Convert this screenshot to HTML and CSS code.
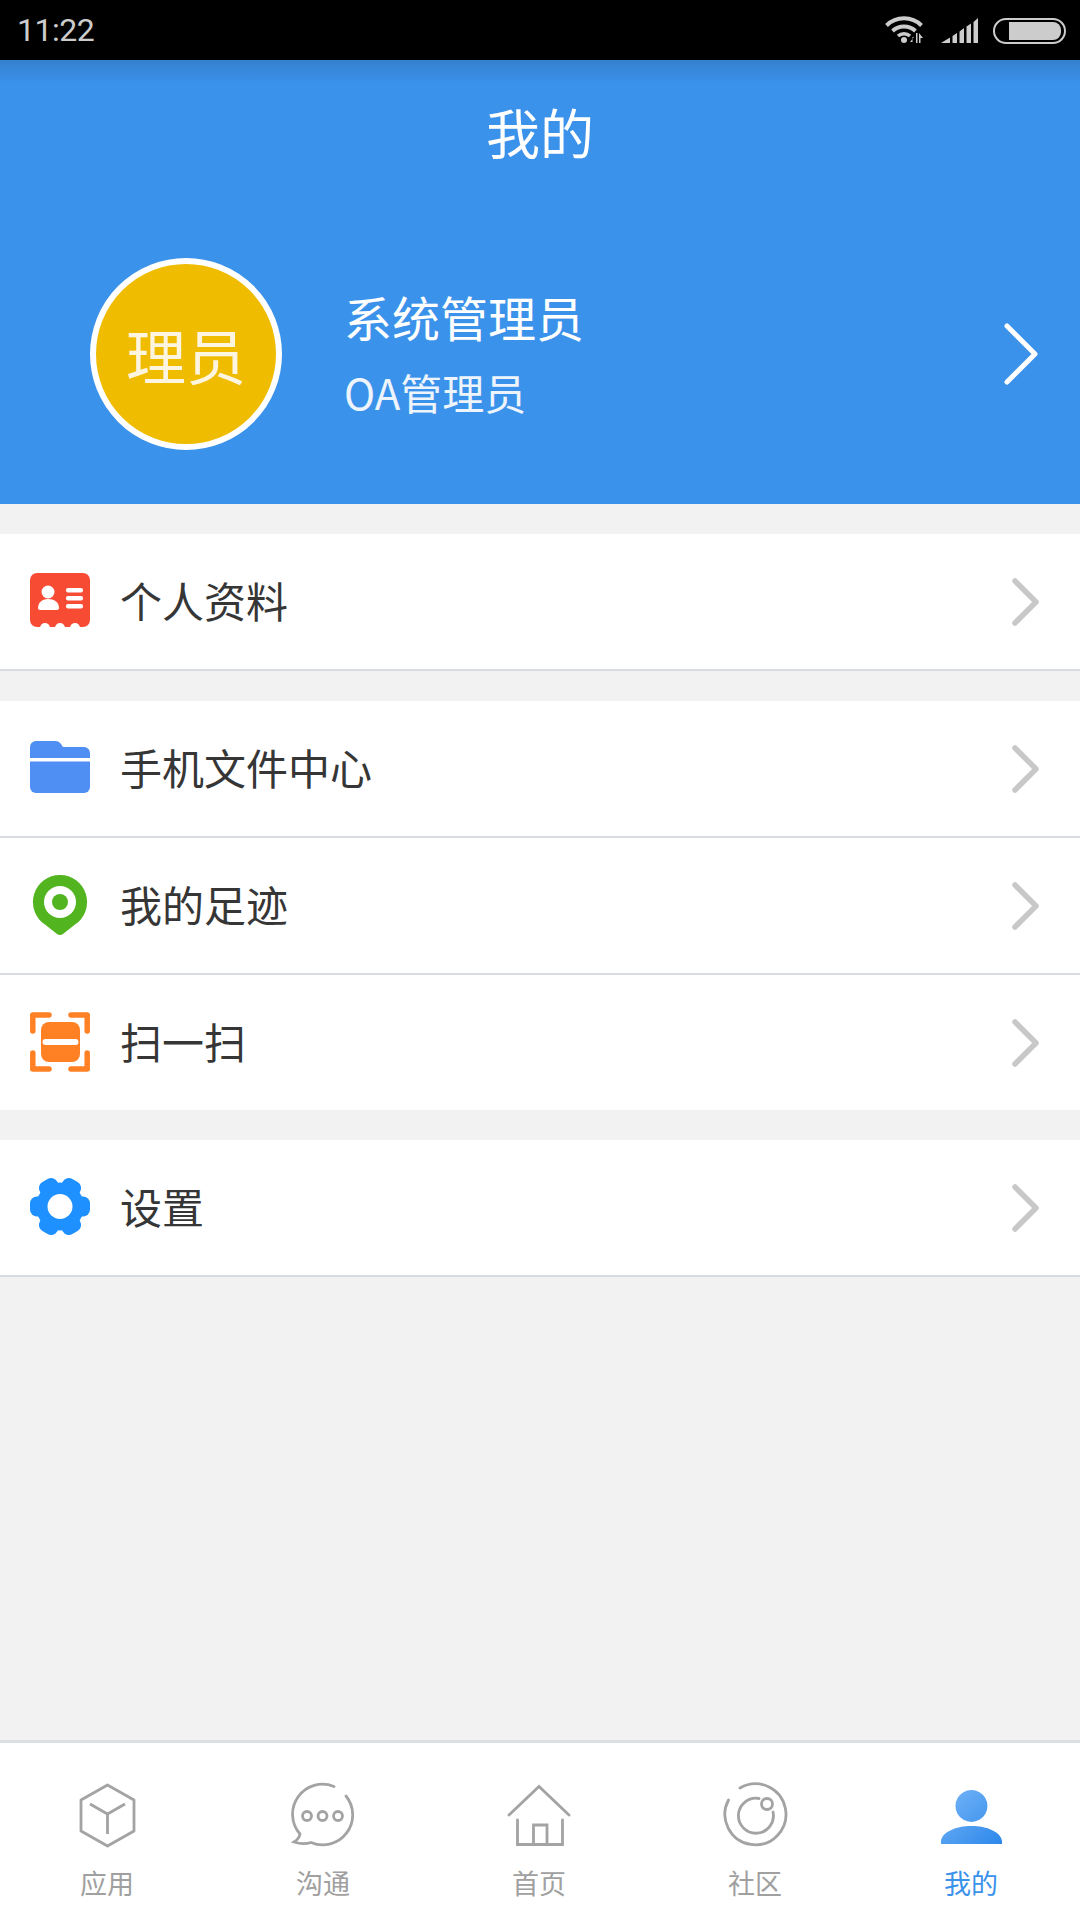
FILE: index.html
```html
<!DOCTYPE html>
<html lang="zh-CN">
<head>
    <meta charset="UTF-8">
    <meta name="viewport" content="width=device-width, initial-scale=1.0">
    <title>我的</title>
    <link rel="stylesheet" href="styles.css">
</head>
<body>
<div class="page">
    <!-- Status bar -->
    <div class="status-bar">
        <span class="time">11:22</span>
        <div class="status-icons">
            <svg class="wifi" width="38" height="27" viewBox="0 0 38 27">
                <g fill="none" stroke="#ccc" stroke-width="4">
                    <path d="M1.5 9.5 A25 25 0 0 1 36.5 9.5"/>
                    <path d="M7.5 15 A17 17 0 0 1 30.5 15"/>
                    <path d="M13 20 A9 9 0 0 1 25 20" stroke-width="3.5"/>
                </g>
                <circle cx="19" cy="24" r="3" fill="#ccc"/>
                <path d="M29 21 H27.5 V26 H25 L29 21Z M31 27 V17 H32.5 V27Z M34 27 V17 L38 22 H35.5 V27Z" fill="#ccc"/>
            </svg>
            <svg class="signal" width="37" height="25" viewBox="0 0 37 25">
                <path d="M0 25 L9 19.5 V25Z M11.5 18 L16 15 V25 H11.5Z M18.5 13.5 L23 10 V25 H18.5Z M25.5 8.500 L30 5.500 V25 H25.500Z M32.500 4 L37 0 V25 H32.500Z" fill="#ccc"/>
            </svg>
            <div class="battery"><div class="battery-fill"></div></div>
        </div>
    </div>

    <!-- Header -->
    <div class="header">
        <div class="title">我的</div>
        <div class="profile">
            <div class="avatar">理员</div>
            <div class="profile-text">
                <div class="name">系统管理员</div>
                <div class="role">OA管理员</div>
            </div>
            <svg class="profile-arrow" width="34" height="62" viewBox="0 0 34 62">
                <path d="M3 3 L31 31 L3 59" fill="none" stroke="#fff" stroke-width="5" stroke-linecap="round" stroke-linejoin="round"/>
            </svg>
        </div>
    </div>

    <!-- Menu -->
    <div class="content">
        <div class="group">
            <div class="row">
                <svg class="row-icon" width="60" height="65" viewBox="0 0 60 65">
                    <rect y="4" width="60" height="54" rx="7" fill="#f84b34"/>
                    <g fill="#fff">
                        <circle cx="15" cy="59" r="5"/>
                        <circle cx="30" cy="59" r="5"/>
                        <circle cx="45" cy="59" r="5"/>
                        <circle cx="18" cy="23" r="6.500"/>
                        <path d="M8 39 C8 33 13 30 18 30 C24 30 29 33 29 39 Q29 41 26 41 H11 Q8 41 8 39Z"/>
                        <rect x="36" y="19" width="17" height="4.500" rx="2"/>
                        <rect x="36" y="27" width="17" height="4.500" rx="2"/>
                        <rect x="36" y="35" width="17" height="4.500" rx="2"/>
                    </g>
                </svg>
                <span class="row-label">个人资料</span>
                <svg class="row-arrow" width="28" height="52" viewBox="0 0 28 52">
                    <path d="M4 5 L25 26 L4 47" fill="none" stroke="#c8c8c8" stroke-width="5.500" stroke-linecap="round" stroke-linejoin="round"/>
                </svg>
            </div>
        </div>

        <div class="group">
            <div class="row">
                <svg class="row-icon" width="60" height="65" viewBox="0 0 60 65">
                    <g fill="#4f8ef3">
                        <path d="M0 22 V11 A6 6 0 0 1 6 5 H25 A7 7 0 0 1 31 8 L33 11 H54 A6 6 0 0 1 60 17 V22Z"/>
                        <path d="M0 25.500 H60 V51 A6 6 0 0 1 54 57 H6 A6 6 0 0 1 0 51Z"/>
                    </g>
                </svg>
                <span class="row-label">手机文件中心</span>
                <svg class="row-arrow" width="28" height="52" viewBox="0 0 28 52">
                    <path d="M4 5 L25 26 L4 47" fill="none" stroke="#c8c8c8" stroke-width="5.500" stroke-linecap="round" stroke-linejoin="round"/>
                </svg>
            </div>
            <div class="row">
                <svg class="row-icon" width="60" height="65" viewBox="0 0 60 65">
                    <path d="M30 2 A27 27 0 0 1 45 51.500 L33 61 Q30 63 27 61 L15 51.500 A27 27 0 0 1 30 2Z" fill="#52b520"/>
                    <circle cx="30" cy="29" r="16" fill="#fff"/>
                    <circle cx="30" cy="29" r="8" fill="#52b520"/>
                </svg>
                <span class="row-label">我的足迹</span>
                <svg class="row-arrow" width="28" height="52" viewBox="0 0 28 52">
                    <path d="M4 5 L25 26 L4 47" fill="none" stroke="#c8c8c8" stroke-width="5.500" stroke-linecap="round" stroke-linejoin="round"/>
                </svg>
            </div>
            <div class="row row-last">
                <svg class="row-icon" width="60" height="65" viewBox="0 0 60 65">
                    <g fill="none" stroke="#ff8124" stroke-width="5.500" stroke-linecap="round" stroke-linejoin="round">
                        <path d="M2.800 21 V5 H19"/>
                        <path d="M41 5 H57.200 V21"/>
                        <path d="M2.800 43 V59 H19"/>
                        <path d="M41 59 H57.200 V43"/>
                    </g>
                    <rect x="11" y="12" width="39" height="40" rx="8" fill="#ff8124"/>
                    <rect x="12.500" y="29" width="36" height="6" rx="3" fill="#fff"/>
                </svg>
                <span class="row-label">扫一扫</span>
                <svg class="row-arrow" width="28" height="52" viewBox="0 0 28 52">
                    <path d="M4 5 L25 26 L4 47" fill="none" stroke="#c8c8c8" stroke-width="5.500" stroke-linecap="round" stroke-linejoin="round"/>
                </svg>
            </div>
        </div>

        <div class="group">
            <div class="row">
                <svg class="row-icon" width="60" height="65" viewBox="0 0 60 65">
                    <g fill="#1e90ff">
                        <circle cx="30" cy="31.500" r="24"/>
                        <rect x="0" y="21.500" width="60" height="20" rx="7"/>
                        <rect x="0" y="21.500" width="60" height="20" rx="7" transform="rotate(60 30 31.500)"/>
                        <rect x="0" y="21.500" width="60" height="20" rx="7" transform="rotate(120 30 31.500)"/>
                    </g>
                    <circle cx="30" cy="31.500" r="12.500" fill="#fff"/>
                </svg>
                <span class="row-label">设置</span>
                <svg class="row-arrow" width="28" height="52" viewBox="0 0 28 52">
                    <path d="M4 5 L25 26 L4 47" fill="none" stroke="#c8c8c8" stroke-width="5.500" stroke-linecap="round" stroke-linejoin="round"/>
                </svg>
            </div>
        </div>
    </div>

    <!-- Bottom tabs -->
    <div class="tabs">
        <div class="tab">
            <svg width="66" height="66" viewBox="0 0 66 66" fill="none" stroke="#a3a3a3" stroke-width="2.800" stroke-linejoin="round">
                <path d="M32.500 3 L59 18 V49 L32.500 64 L6 49 V18Z"/>
                <path d="M15 22 L32.500 32 L50 22 M32.500 32 V52"/>
            </svg>
            <span>应用</span>
        </div>
        <div class="tab">
            <svg width="66" height="66" viewBox="0 0 66 66" fill="none" stroke="#a3a3a3" stroke-width="2.800" stroke-linecap="round">
                <path d="M43 4.500 A30 30 0 0 0 9 52 Q8 57 3 60 Q12 63 20 60.500 A30 30 0 0 0 55 14"/>
                <circle cx="16" cy="34" r="4.500"/>
                <circle cx="31.500" cy="34" r="4.500"/>
                <circle cx="47" cy="34" r="4.500"/>
            </svg>
            <span>沟通</span>
        </div>
        <div class="tab">
            <svg width="66" height="66" viewBox="0 0 66 66" fill="none" stroke="#a3a3a3" stroke-width="2.800" stroke-linecap="round">
                <path d="M2 33 L32 4.500 L62 33"/>
                <path d="M10.500 38 V62.500 H55.500 V38"/>
                <path d="M26.500 62.500 V43 H40 V62.500"/>
            </svg>
            <span>首页</span>
        </div>
        <div class="tab">
            <svg width="66" height="66" viewBox="0 0 66 66" fill="none" stroke="#a3a3a3" stroke-width="2.800" stroke-linecap="round">
                <path d="M17 6 A30.500 30.500 0 1 1 5.500 18"/>
                <path d="M36 16.500 A17.500 17.500 0 1 0 50 30"/>
                <circle cx="44" cy="22" r="5.500"/>
            </svg>
            <span>社区</span>
        </div>
        <div class="tab tab-active">
            <svg width="66" height="66" viewBox="0 0 66 66">
                <defs>
                    <linearGradient id="personFill" x1="0" y1="0" x2="1" y2="1">
                        <stop offset="0" stop-color="#78b6f7"/>
                        <stop offset="1" stop-color="#2c88eb"/>
                    </linearGradient>
                </defs>
                <path fill="url(#personFill)" d="M32.500 8 A16 16 0 1 1 32.400 8Z M2 62 V59 C3 50 17 44 32.500 44 C48 44 62 50 63 59 V62Z"/>
            </svg>
            <span>我的</span>
        </div>
    </div>
</div>
</body>
</html>
```

FILE: styles.css
```css
* {
    box-sizing: border-box;
}
body {
    margin: 0;
    font-family: "Noto Sans CJK SC", "Noto Sans", sans-serif;
}
.page {
    width: 1080px;
    height: 1920px;
    display: flex;
    flex-direction: column;
    background-color: #f2f2f2;
}
.status-bar {
    height: 60px;
    flex: none;
    display: flex;
    align-items: center;
    justify-content: space-between;
    padding: 0 14px 0 17px;
    background-color: #000;
}
.time {
    font-family: Roboto, sans-serif;
    font-size: 32px;
    letter-spacing: -0.5px;
    color: #ccc;
}
.status-icons {
    display: flex;
    align-items: center;
    gap: 15px;
}
.wifi {
    margin-top: -1px;
    margin-right: 3px;
}
.signal {
    margin-top: 1px;
}
.battery {
    width: 73px;
    height: 26px;
    padding: 2px 3px 2px 14px;
    border: 2.5px solid #ccc;
    border-radius: 13px;
    margin-top: 1px;
}
.battery-fill {
    height: 100%;
    background-color: #ccc;
    border-radius: 0 8px 8px 0;
}
.header {
    height: 444px;
    flex: none;
    color: #fff;
    background: linear-gradient(#3580d0, #3b92ea 24px);
}
.title {
    height: 143px;
    display: flex;
    align-items: center;
    justify-content: center;
    font-size: 54px;
}
.profile {
    height: 301px;
    display: flex;
    align-items: center;
    padding: 0 42px 0 90px;
}
.avatar {
    width: 192px;
    height: 192px;
    flex: none;
    display: flex;
    align-items: center;
    justify-content: center;
    border: 6px solid #fff;
    border-radius: 50%;
    background-color: #f0bc00;
    font-size: 60px;
    color: #fdf5e0;
}
.profile-text {
    flex: 1;
    margin-left: 62px;
    margin-bottom: 4px;
}
.name {
    font-size: 48px;
    line-height: 68px;
}
.role {
    font-size: 42px;
    line-height: 60px;
    margin-top: 12px;
    color: #eef4fc;
}
.content {
    flex: 1;
    padding-top: 30px;
}
.group {
    margin-bottom: 30px;
    background-color: #fff;
}
.row {
    height: 137px;
    display: flex;
    align-items: center;
    padding: 0 41px 0 30px;
    border-bottom: 2px solid #d8dce0;
}
.row-last {
    height: 135px;
    border-bottom: none;
}
.row-icon {
    flex: none;
}
.row-label {
    flex: 1;
    margin-left: 30px;
    margin-bottom: 4px;
    font-size: 42px;
    color: #363636;
}
.tabs {
    height: 180px;
    flex: none;
    display: flex;
    border-top: 3px solid #dcdfe2;
    background-color: #fff;
}
.tab {
    flex: 1;
    display: flex;
    flex-direction: column;
    align-items: center;
    padding-top: 39px;
    font-size: 27px;
    color: #a0a0a0;
}
.tab span {
    margin-top: 16px;
    margin-right: 2px;
    line-height: 38px;
}
.tab-active {
    color: #3b92ea;
}
```
